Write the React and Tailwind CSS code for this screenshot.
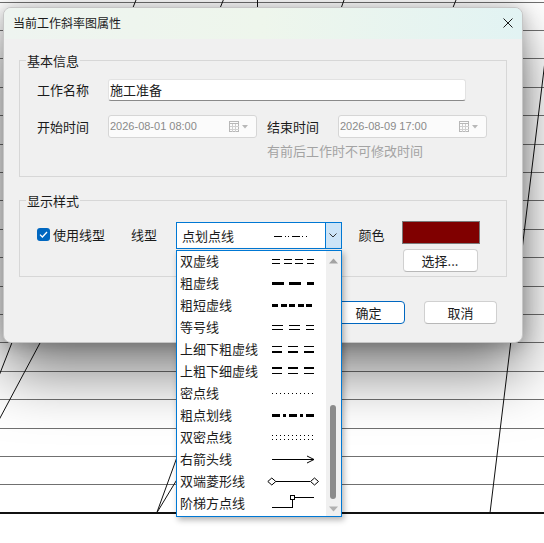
import React from 'react';

const ITEMS = [
  ['双虚线', 'double'],
  ['粗虚线', 'thickDash'],
  ['粗短虚线', 'thickShort'],
  ['等号线', 'equal'],
  ['上细下粗虚线', 'thinThick'],
  ['上粗下细虚线', 'thickThin'],
  ['密点线', 'dots'],
  ['粗点划线', 'thickDashDot'],
  ['双密点线', 'doubleDots'],
  ['右箭头线', 'arrow'],
  ['双端菱形线', 'diamond'],
  ['阶梯方点线', 'step'],
];

// one horizontal stroke of a line preview
function Stroke({ y, w = 1, da, x1 = 6, x2 = 48 }) {
  return (
    <line x1={x1} x2={x2} y1={y} y2={y} stroke="#000" strokeWidth={w} strokeDasharray={da} shapeRendering="crispEdges" />
  );
}

function LinePreview({ kind }) {
  let body = null;
  switch (kind) {
    case 'double':
      body = <><Stroke y={6.5} da="8 3.5" /><Stroke y={10.5} da="8 3.5" /></>;
      break;
    case 'thickDash':
      body = <Stroke y={8.5} w={3} da="11.5 5.8" />;
      break;
    case 'thickShort':
      body = <Stroke y={8.5} w={3} da="6 2.5" />;
      break;
    case 'equal':
      body = <><Stroke y={6.5} da="11 6" /><Stroke y={10.5} da="11 6" /></>;
      break;
    case 'thinThick':
      body = <><Stroke y={5.5} da="10 6" /><Stroke y={11} w={2} da="10 6" /></>;
      break;
    case 'thickThin':
      body = <><Stroke y={5} w={2} da="10 6" /><Stroke y={10.5} da="10 6" /></>;
      break;
    case 'dots':
      body = <Stroke y={8.5} da="1 3" />;
      break;
    case 'thickDashDot':
      body = <Stroke y={8.5} w={3} da="8 3 3 3" />;
      break;
    case 'doubleDots':
      body = <><Stroke y={6.5} da="1 3" /><Stroke y={10.5} da="1 3" /></>;
      break;
    case 'arrow':
      body = (
        <>
          <Stroke y={8.5} />
          <polyline points="41,5 48,8.5 41,12" fill="none" stroke="#000" strokeWidth="1" />
        </>
      );
      break;
    case 'diamond':
      body = (
        <>
          <Stroke y={8.5} x1={10} x2={44} />
          <polygon points="1.8,8.5 5.8,5 9.8,8.5 5.8,12" fill="#fff" stroke="#000" />
          <polygon points="44.5,8.5 48.5,5 52.5,8.5 48.5,12" fill="#fff" stroke="#000" />
        </>
      );
      break;
    case 'step':
      body = (
        <>
          <Stroke y={12.5} x1={6} x2={27} />
          <line x1="26.5" x2="26.5" y1="4.5" y2="12.5" stroke="#000" shapeRendering="crispEdges" />
          <rect x="24.5" y="0.5" width="4" height="4" fill="#fff" stroke="#000" shapeRendering="crispEdges" />
          <Stroke y={2.5} x1={28.5} x2={48} />
        </>
      );
      break;
    default:
      break;
  }
  return (
    <svg width="56" height="16" viewBox="0 0 56 16" className="shrink-0">
      {body}
    </svg>
  );
}

function Canvas() {
  const rows = Array.from({ length: 18 }, (_, k) => Math.round(1.5 + 28.4 * k) + 0.5);
  return (
    <svg className="absolute inset-0" width="544" height="543">
      {rows.map((y) => (
        <line key={y} x1="0" x2="544" y1={y} y2={y} stroke="#707070" shapeRendering="crispEdges" />
      ))}
      <line x1="0" x2="544" y1="513" y2="513" stroke="#111" strokeWidth="2" shapeRendering="crispEdges" />
      {/* slanted links */}
      <line x1="136" y1="0" x2="124.6" y2="28.4" stroke="#111" />
      <line x1="223.3" y1="0" x2="212" y2="28.4" stroke="#111" />
      <line x1="257.5" y1="0" x2="257.5" y2="28.4" stroke="#111" />
      <line x1="344" y1="0" x2="334" y2="28.4" stroke="#111" />
      <line x1="456" y1="0" x2="444.6" y2="28.4" stroke="#111" />
      <line x1="550" y1="20" x2="490" y2="513" stroke="#111" />
      <line x1="20" y1="322" x2="-4" y2="383.5" stroke="#111" />
      <line x1="48" y1="328" x2="-4" y2="425.5" stroke="#111" />
      <line x1="156.7" y1="513" x2="200" y2="394" stroke="#111" />
      <line x1="156.7" y1="513" x2="200" y2="441.5" stroke="#111" />
    </svg>
  );
}

function CalendarIcon() {
  return (
    <svg width="10" height="11" viewBox="0 0 10 11" className="ml-auto shrink-0">
      <rect x="0.5" y="0.5" width="9" height="10" fill="#fdfdfd" stroke="#b8b8b8" shapeRendering="crispEdges" />
      <line x1="0.5" x2="9.5" y1="2.5" y2="2.5" stroke="#b8b8b8" shapeRendering="crispEdges" />
      <line x1="0.5" x2="9.5" y1="5.5" y2="5.5" stroke="#d0d0d0" shapeRendering="crispEdges" />
      <line x1="0.5" x2="9.5" y1="8" y2="8" stroke="#d0d0d0" shapeRendering="crispEdges" />
      <line x1="3.5" x2="3.5" y1="2.5" y2="10.5" stroke="#d0d0d0" shapeRendering="crispEdges" />
      <line x1="6.5" x2="6.5" y1="2.5" y2="10.5" stroke="#d0d0d0" shapeRendering="crispEdges" />
    </svg>
  );
}

function DateBox({ value }) {
  return (
    <div className="w-[149px] h-[23px] flex items-center pl-[1px] pr-[8px] bg-[#fbfbfb] border border-[#d6d6d6] rounded-[3px]">
      <span className="text-[11px] text-[#8a8a8a] [font-family:'Liberation_Sans',sans-serif]">{value}</span>
      <CalendarIcon />
      <svg width="6" height="4" viewBox="0 0 6 4" className="ml-[3px] shrink-0">
        <polygon points="0,0 6,0 3,3.5" fill="#b8b8b8" />
      </svg>
    </div>
  );
}

export default function App() {
  return (
    <div className="relative w-[544px] h-[543px] bg-white overflow-hidden text-[13px] text-[#1b1b1b] [font-family:'Noto_Sans_CJK_SC','Noto_Sans',sans-serif]">
      <Canvas />

      {/* dialog window */}
      <div className="absolute left-[3px] top-[7px] w-[520px] h-[336px] flex flex-col rounded-[8px] border border-[#c6c6c6] bg-[#f0f0f0] overflow-hidden shadow-[0_30px_60px_rgba(0,0,0,0.5),0_2px_18px_rgba(0,0,0,0.25)]">
        <div className="h-[31px] shrink-0 flex items-center justify-between pl-[9px] pr-[9px] pb-[2px] bg-gradient-to-r from-[#eef4f0] via-[#eef6ec] to-[#e2f3f3]">
          <span className="text-[12px] leading-none text-[#1a1a1a]">当前工作斜率图属性</span>
          <svg width="10" height="10" viewBox="0 0 10 10">
            <path d="M0.5 0.5 L9.5 9.5 M9.5 0.5 L0.5 9.5" stroke="#1a1a1a" strokeWidth="1" />
          </svg>
        </div>

        <div className="flex flex-col px-[15px] pt-[12.5px]">
          {/* 基本信息 */}
          <fieldset className="border border-[#d7d7d7] pb-[17px]">
            <legend className="ml-[6px] px-[1px] leading-[17px]">基本信息</legend>
            <div className="flex flex-col pl-[17px]">
              <div className="mt-[10.5px] h-[22px] flex items-center">
                <span className="w-[71px] shrink-0">工作名称</span>
                <div className="w-[358px] h-[22px] flex items-center pl-[1px] bg-white border border-[#e2e2e2] border-b-[#8a8a8a] rounded-[3px]">
                  施工准备
                </div>
              </div>
              <div className="mt-[14px] h-[23px] flex items-center">
                <span className="w-[71px] shrink-0">开始时间</span>
                <DateBox value="2026-08-01 08:00" />
                <span className="w-[71px] shrink-0 ml-[10px]">结束时间</span>
                <DateBox value="2026-08-09 17:00" />
              </div>
              <div className="mt-[5px] ml-[230px] leading-[16px] text-[#a3a3a3]">有前后工作时不可修改时间</div>
            </div>
          </fieldset>

          {/* 显示样式 */}
          <fieldset className="mt-[14.5px] border border-[#d7d7d7] pb-[3.5px]">
            <legend className="ml-[6px] px-[1px] leading-[17px]">显示样式</legend>
            <div className="mt-[12.5px] pl-[17px] flex items-start">
              <div className="w-[94px] h-[27px] shrink-0 flex items-center gap-[3px]">
                <span className="w-[13px] h-[13px] rounded-[3px] bg-[#0067c0] flex items-center justify-center">
                  <svg width="9" height="7" viewBox="0 0 9 7">
                    <polyline points="1,3.6 3.4,6 8,1" fill="none" stroke="#fff" strokeWidth="1.3" />
                  </svg>
                </span>
                <span>使用线型</span>
              </div>
              <div className="w-[44.5px] h-[27px] shrink-0 flex items-center">线型</div>
              <div className="mt-px w-[166px] h-[27px] shrink-0 flex bg-white border border-[#0078d4]">
                <div className="flex-1 flex items-center pl-[5.5px]">
                  <span className="w-[92px] shrink-0">点划点线</span>
                  <svg width="36" height="10" viewBox="0 0 36 10" className="shrink-0">
                    <line x1="0" x2="35" y1="5.5" y2="5.5" stroke="#000" strokeDasharray="8 2.5 1 2.5 1 2.5" shapeRendering="crispEdges" />
                  </svg>
                </div>
                <div className="w-[16px] shrink-0 flex items-center justify-center bg-[#cce4f7] border-l border-[#0078d4]">
                  <svg width="8" height="5" viewBox="0 0 8 5">
                    <polyline points="0.5,0.5 4,4 7.5,0.5" fill="none" stroke="#333" strokeWidth="1" />
                  </svg>
                </div>
              </div>
              <div className="w-[60px] h-[27px] shrink-0 flex items-center pl-[17px]">颜色</div>
              <div className="flex flex-col gap-[5px]">
                <div className="w-[78px] h-[23px] bg-[#800000] border border-[#7a7a7a]" />
                <button className="ml-px w-[75px] h-[23px] flex items-center justify-center bg-white border border-[#d0d0d0] border-b-[#b8b8b8] rounded-[4px] leading-none">
                  选择...
                </button>
              </div>
            </div>
          </fieldset>

          <div className="mt-[24.5px] flex justify-end gap-[19px] pr-[10px]">
            <button className="w-[73px] h-[23px] flex items-center justify-center bg-white border border-[#0067c0] rounded-[4px] leading-none">
              确定
            </button>
            <button className="w-[73px] h-[23px] flex items-center justify-center bg-white border border-[#d0d0d0] border-b-[#b8b8b8] rounded-[4px] leading-none">
              取消
            </button>
          </div>
        </div>
      </div>

      {/* open line-type dropdown */}
      <div className="absolute left-[175.5px] top-[249.5px] w-[166px] h-[267px] flex bg-white border border-[#0078d4] shadow-[2px_3px_6px_rgba(0,0,0,0.3)]">
        <div className="flex-1 flex flex-col -mt-[1px]">
          {ITEMS.map(([label, kind]) => (
            <div key={kind} className="h-[22px] shrink-0 flex items-center">
              <span className="w-[89.5px] shrink-0 pl-[3.5px] whitespace-nowrap">{label}</span>
              <LinePreview kind={kind} />
            </div>
          ))}
        </div>
        <div className="w-[15px] shrink-0 flex flex-col items-center bg-[#f0f0f0]">
          <svg width="9" height="6" viewBox="0 0 9 6" className="mt-[7px]">
            <polygon points="0,5.5 4.5,0.5 9,5.5" fill="#a3a3a3" />
          </svg>
          <div className="mt-[141px] w-[6px] h-[94px] rounded-full bg-[#8b8b8b]" />
          <svg width="9" height="6" viewBox="0 0 9 6" className="mt-[7px]">
            <polygon points="0,0.5 4.5,5.5 9,0.5" fill="#b0b0b0" />
          </svg>
        </div>
      </div>
    </div>
  );
}
